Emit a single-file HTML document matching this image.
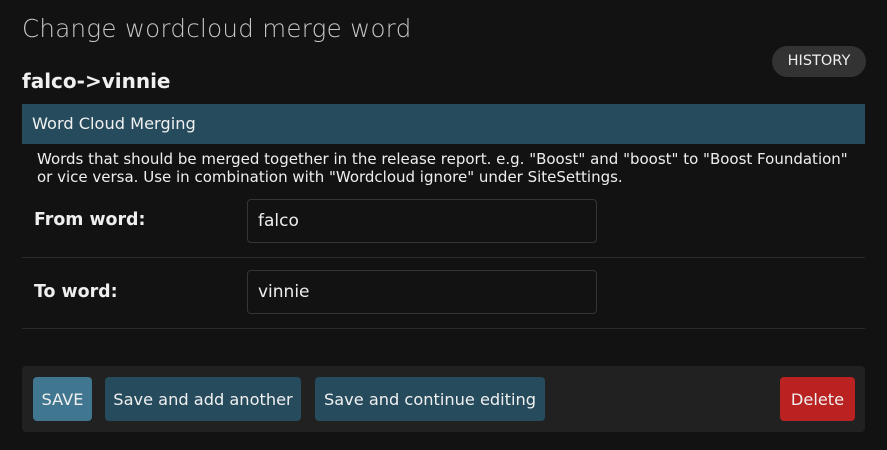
<!DOCTYPE html>
<html><head><style>
body{margin:0;width:887px;height:450px;background:#121212;font-family:"DejaVu Sans","Liberation Sans",sans-serif;color:#eee;position:relative;overflow:hidden}
div{position:absolute;box-sizing:border-box}
.btn{top:377px;height:44px;border-radius:4px;color:#f0f0f0;font-size:16.2px;line-height:45px;text-align:center}
.inp{left:247px;width:350px;height:44px;border:1px solid #353535;border-radius:4px;font-size:17px;line-height:43px;padding-left:10px;color:#eee}
.lbl{left:34px;font-weight:bold;font-size:17.4px}
.hr{left:22px;width:843px;height:1px;background:#2a2a2a}
</style></head><body>
<div style="left:22px;top:14px;font-size:24.5px;font-weight:300;color:#c8c8c8;letter-spacing:0.3px">Change wordcloud merge word</div>
<div style="left:772px;top:46px;width:94px;height:31px;border-radius:16px;background:#333;font-size:14.5px;line-height:31px;text-align:center;color:#eee">HISTORY</div>
<div style="left:22px;top:69px;font-size:20px;font-weight:bold;color:#f0f0f0">falco-&gt;vinnie</div>
<div style="left:22px;top:104px;width:843px;height:40px;background:#264b5d;font-size:16.2px;line-height:40px;padding-left:10px;color:#f0f0f0">Word Cloud Merging</div>
<div style="left:37px;top:150px;font-size:15px;line-height:18px;color:#eee;width:850px;white-space:nowrap">Words that should be merged together in the release report. e.g. "Boost" and "boost" to "Boost Foundation"<br>or vice versa. Use in combination with "Wordcloud ignore" under SiteSettings.</div>
<div class="lbl" style="top:210px">From word:</div>
<div class="inp" style="top:199px">falco</div>
<div class="hr" style="top:257px"></div>
<div class="lbl" style="top:282px">To word:</div>
<div class="inp" style="top:270px">vinnie</div>
<div class="hr" style="top:328px"></div>
<div style="left:22px;top:366px;width:843px;height:66px;background:#212121;border-radius:4px"></div>
<div class="btn" style="left:33px;width:59px;background:#417690">SAVE</div>
<div class="btn" style="left:105px;width:196px;background:#264b5d">Save and add another</div>
<div class="btn" style="left:315px;width:230px;background:#264b5d">Save and continue editing</div>
<div class="btn" style="left:780px;width:75px;background:#ba2121">Delete</div>
</body></html>
